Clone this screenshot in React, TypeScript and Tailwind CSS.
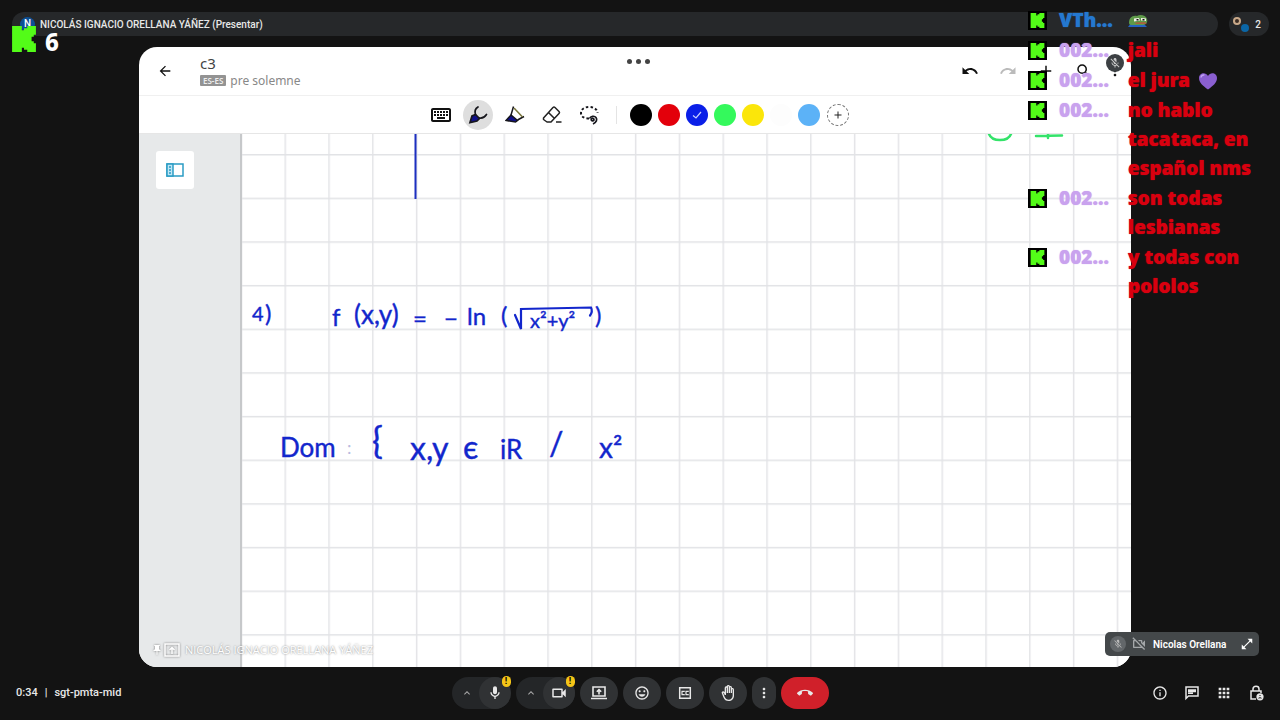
import type { ReactNode } from "react";
import {
  MdAdd,
  MdArrowBack,
  MdCallEnd,
  MdKeyboardArrowUp,
  MdMicOff,
  MdMoreVert,
  MdOpenInFull,
  MdApps,
  MdPushPin,
  MdRedo,
  MdSearch,
  MdUndo,
  MdOutlineBackHand,
  MdOutlineInfo,
  MdOutlineKeyboard,
  MdOutlineMic,
  MdOutlineMood,
  MdOutlineVideocam,
  MdOutlineVideocamOff,
} from "react-icons/md";

const MESSAGES = [
  { user: "VTh...", color: "text-[#2478d0]", text: "", emoji: "frog" },
  { user: "002...", color: "text-[#c9a2ee]", text: "jali" },
  { user: "002...", color: "text-[#c9a2ee]", text: "el jura", emoji: "heart" },
  { user: "002...", color: "text-[#c9a2ee]", text: "no hablo tacataca, en español nms" },
  { user: "002...", color: "text-[#c9a2ee]", text: "son todas lesbianas" },
  { user: "002...", color: "text-[#c9a2ee]", text: "y todas con pololos" },
];

const SWATCHES = [
  { name: "Negro", bg: "bg-black" },
  { name: "Rojo", bg: "bg-[#e3000b]" },
  { name: "Azul", bg: "bg-[#0a1fe8]", selected: true },
  { name: "Verde", bg: "bg-[#34f95c]" },
  { name: "Amarillo", bg: "bg-[#fbe60a]" },
  { name: "Blanco", bg: "bg-[#fdfdfd]" },
  { name: "Celeste", bg: "bg-[#5cb2f7]" },
];

function KickLogo({ className }: { className: string }) {
  return (
    <svg viewBox="0 0 24 24" className={className} fill="#53fc18" aria-hidden="true">
      <path d="M1 0h9v4h2V2h3V0h8v8h-2v2h-2v4h2v2h2v8h-8v-2h-3v-2h-2v4H1Z" />
    </svg>
  );
}

function Frog() {
  return (
    <svg viewBox="0 0 20 14" className="h-[14px] w-5" aria-hidden="true">
      <path d="M0 13 3 9l13 1 3 3H0Z" fill="#2563c4" />
      <path d="M1 9C1 4 4 1 9 2c3-2 9-1 10 3 1 3-1 6-4 6H5c-2 0-4 0-4-2Z" fill="#5f9a4a" />
      <path d="M6 4.500 11 4l1 2.500-6 1ZM13 4l5 .5V7l-5-.5Z" fill="#f4f4ea" />
      <path d="M8.500 5h2v1.500h-2ZM14.500 5h2v1.500h-2Z" fill="#111" />
      <path d="M7 8.500 17.500 8l1 2H8Z" fill="#a8623c" />
    </svg>
  );
}

function Heart() {
  return (
    <svg viewBox="0 0 20 18" className="h-[18px] w-5" aria-hidden="true">
      <path d="M10 17.500C5 14 1 10.500 1 6c0-5 6.500-6.500 9-2 2.500-4.500 9-3 9 2 0 4.500-4 8-9 11.500Z" fill="#8a5fd0" />
      <path d="M3 5.500C3.300 3.400 5 2.700 6.400 3" stroke="#c3a4f2" strokeWidth="1.500" fill="none" />
    </svg>
  );
}

function ChatOverlay() {
  return (
    <ul className="absolute top-[6px] right-2 z-20 flex flex-col gap-px font-['Noto_Sans','Open_Sans',sans-serif] text-[19px] leading-[29px] font-black">
      {MESSAGES.map((m, i) => (
        <li key={i} className="flex">
          <span className="mt-[5px] grid size-[19px] shrink-0 place-items-center bg-black">
            <KickLogo className="size-[15px]" />
          </span>
          <span className={`ml-3 w-[69px] shrink-0 [text-shadow:0_0_1px_currentColor] ${m.color}`}>{m.user}</span>
          <span className="flex w-36 gap-2 text-[#d8000f] [text-shadow:0_0_1px_#d8000f]">
            {m.text && <span>{m.text}</span>}
            {m.emoji && (
              <span className="flex h-[29px] items-center">{m.emoji === "frog" ? <Frog /> : <Heart />}</span>
            )}
          </span>
        </li>
      ))}
    </ul>
  );
}

function TopBar() {
  return (
    <header className="flex items-center gap-[11px] pt-3 pr-[11px] pl-3 text-[10px] font-medium text-[#e8e8e8]">
      <div className="flex h-6 flex-1 items-center gap-[5px] rounded-full bg-[#26282a] pl-2">
        <span className="grid size-[15px] place-items-center rounded-full bg-[#0d4f94] leading-none text-white">N</span>
        <span>NICOLÁS IGNACIO ORELLANA YÁÑEZ (Presentar)</span>
      </div>
      <div className="flex h-6 w-10 items-center justify-between rounded-full bg-[#26282a] pr-2 pl-1">
        <span className="relative size-4">
          <span className="absolute top-px left-0 size-2 rounded-full bg-[#c9a98a]" />
          <span className="absolute top-[3px] left-[2px] size-1 rounded-full bg-[#3b2d25]" />
          <span className="absolute right-0 bottom-0 size-2 rounded-full bg-[#0b66a6]" />
        </span>
        <span>2</span>
      </div>
    </header>
  );
}

function NoteHeader() {
  return (
    <div className="flex h-[49px] items-center border-b border-[#f0f0f0] pr-2 pl-[18px] text-[#111]">
      <button aria-label="Volver" className="grid size-4 place-items-center">
        <MdArrowBack className="size-4" />
      </button>
      <div className="ml-[27px] flex-1 pt-px font-['Noto_Sans',sans-serif]">
        <h1 className="text-[15px] leading-[18px] text-[#444]">c3</h1>
        <p className="flex items-center gap-1 text-xs leading-[18px] text-[#888]">
          <span className="rounded-[1px] bg-[#939393] px-[3px] text-[8px] leading-[11px] font-semibold text-[#eee]">ES-ES</span>
          pre solemne
        </p>
      </div>
      <div className="flex items-center gap-5">
        <button aria-label="Deshacer"><MdUndo className="size-[18px]" /></button>
        <button aria-label="Rehacer" className="text-[#bbb]"><MdRedo className="size-[18px]" /></button>
        <button aria-label="Agregar"><MdAdd className="size-[18px]" /></button>
        <button aria-label="Buscar"><MdSearch className="size-[18px]" /></button>
      </div>
      <button aria-label="Más" className="ml-[14px] w-4"><MdMoreVert className="size-4" /></button>
    </div>
  );
}

function ToolButton({ label, active, children }: { label: string; active?: boolean; children: ReactNode }) {
  return (
    <button
      aria-label={label}
      className={active ? "grid size-[30px] place-items-center rounded-full bg-[#dedede]" : "grid size-[30px] place-items-center"}
    >
      {children}
    </button>
  );
}

function Toolbar() {
  return (
    <div className="flex h-[37px] items-center pl-[287px]">
      <div className="flex gap-[7px]">
        <ToolButton label="Teclado"><MdOutlineKeyboard className="size-6 text-[#111]" /></ToolButton>
        <ToolButton label="Lápiz" active>
          <svg viewBox="0 0 20 20" className="size-5" fill="none" stroke="#16161c" strokeWidth="1.700">
            <path d="M2 17.500 4 11l3.500-1.500 4 4-2.500 2.500Z" fill="#10108a" />
            <path d="M7.500 9.500C6.500 6.500 7.500 3.500 10 2M11.500 13c3 .5 5.500-1.200 7-3.500" strokeLinecap="round" />
          </svg>
        </ToolButton>
        <ToolButton label="Marcador">
          <svg viewBox="0 0 20 20" className="size-5" fill="none" stroke="#16161c" strokeWidth="1.500">
            <path d="M1 15.500 6 10l6.500 5.500-2 1.500Z" fill="#10108a" />
            <path d="M6 10 8.500 1.500M12.500 15l6.500-3.500" />
            <path d="m9 3 8.500 9" stroke="#77743a" />
          </svg>
        </ToolButton>
        <ToolButton label="Borrador">
          <svg viewBox="0 0 20 20" className="size-5" fill="none" stroke="#222" strokeWidth="1.500" strokeLinejoin="round">
            <path d="m1.500 13 9.500-10.500q1-1 2 0L17 6.500q1 1 0 2L9 17H5L1.500 14.500ZM6.500 7.500l6 6" />
            <path d="M14 17h5.500" />
          </svg>
        </ToolButton>
        <ToolButton label="Lazo">
          <svg viewBox="0 0 20 20" className="size-5" fill="none" stroke="#16161c" strokeWidth="2">
            <path d="M10 13.500c-5 0-8-2-8-5.500s3-6 8-6 8.500 2.500 8.500 6" strokeDasharray="2.500 2.200" />
            <path d="M10.500 13.500c1-2.500 5-3 6.500-1s.5 5-3 6.500M14.500 13.500c-1.500-.5-3 1-2 2s3.500 0 2-2Z" strokeWidth="1.700" />
          </svg>
        </ToolButton>
      </div>
      <div className="mr-[10px] ml-3 h-[18px] w-px bg-[#e4e4e4]" />
      <div className="flex items-center gap-[6px] pl-[3px]">
        {SWATCHES.map((s) => (
          <button key={s.name} aria-label={s.name} className={`grid size-[22px] place-items-center rounded-full ${s.bg}`}>
            {s.selected && (
              <svg viewBox="0 0 10 10" className="size-[10px]" fill="none" stroke="#c8d0ff" strokeWidth="1.200">
                <path d="M1 5.500 4 8l5-6" />
              </svg>
            )}
          </button>
        ))}
        <button aria-label="Agregar color" className="ml-px grid size-[22px] place-items-center rounded-full border border-dashed border-[#777] text-[#222]">
          <MdAdd className="size-3" />
        </button>
      </div>
    </div>
  );
}

// Squared paper and ink; ink is placed from the top left corner of the sheet.
function Sheet() {
  return (
    <div className="relative min-w-0 flex-1 overflow-hidden border-l-2 border-[#c6c8ca] bg-white">
      <svg className="absolute inset-0 h-full w-full font-['Lato','Noto_Sans',sans-serif]" role="img" aria-label="Apuntes">
        <defs>
          <pattern id="squares" x="42.500" y="20" width="43.800" height="43.650" patternUnits="userSpaceOnUse">
            <path d="M.75 0V44M0 .75H44" stroke="#e2e3e6" strokeWidth="1.400" />
          </pattern>
        </defs>
        <rect width="100%" height="100%" fill="url(#squares)" />
        <g stroke="#34e36a" strokeWidth="2.500" fill="none" strokeLinecap="round">
          <path d="M747 0c3 8 19 8 22 0M794 2l26-.5M806 0v4" />
        </g>
        <path d="M173.500 0V65" stroke="#1c2fc0" strokeWidth="2" />
        <g fill="#1226cc" stroke="#1226cc" strokeWidth="0.400" fontSize="24">
          <text x="10" y="187" fontSize="20">4</text>
          <text x="23" y="188">)</text>
          <text x="90" y="192">f</text>
          <text x="112" y="190" fontSize="26">(x,y)</text>
          <text x="171" y="193">=</text>
          <text x="202" y="193">−</text>
          <text x="225" y="191">ln</text>
          <text x="259" y="190">(</text>
          <text x="288" y="194" fontSize="20">x²+y²</text>
          <text x="353" y="190">)</text>
          <text x="38" y="323" fontSize="26">Dom</text>
          <text x="130" y="320" fontSize="36">{"{"}</text>
          <text x="168" y="326" fontSize="32">x,y</text>
          <text x="221" y="325" fontSize="32">є</text>
          <text x="258" y="325" fontSize="26">iR</text>
          <text x="307" y="321" fontSize="32">/</text>
          <text x="357" y="324" fontSize="28">x²</text>
        </g>
        <text x="105" y="320" fill="#b9bce0" fontSize="18">:</text>
        <path d="m273 181 6 14V175l70-1.500q2 4-1 8" stroke="#1226cc" strokeWidth="2.200" fill="none" strokeLinecap="round" />
      </svg>
    </div>
  );
}

function Presentation() {
  return (
    <main className="relative mt-[11px] mr-[149px] ml-[139px] flex flex-1 flex-col overflow-hidden rounded-[18px] bg-white">
      <div className="absolute top-3 left-1/2 -ml-2 flex gap-1">
        <span className="size-[5px] rounded-full bg-[#444]" />
        <span className="size-[5px] rounded-full bg-[#444]" />
        <span className="size-[5px] rounded-full bg-[#444]" />
      </div>
      <NoteHeader />
      <Toolbar />
      <div className="flex flex-1 border-t border-[#e6e6e6]">
        <aside className="w-[101px] bg-[#e7e9ea] pt-[17px] pl-[17px]">
          <button aria-label="Páginas" className="grid size-[38px] place-items-center rounded-[3px] bg-white">
            <svg viewBox="0 0 18 14" className="h-[14px] w-[18px]" fill="#fff" stroke="#2b9cc4" strokeWidth="1.500">
              <path d="M1 1h16v12H1Z" />
              <path d="M1 1h6v12H1Z" fill="#bfe6f5" />
              <path d="M3 4h2M3 7h2M3 10h2" />
            </svg>
          </button>
        </aside>
        <Sheet />
      </div>
      <div className="absolute bottom-[9px] left-[12px] flex items-center gap-px font-['Open_Sans',sans-serif] text-[11px] leading-4 font-medium text-white [text-shadow:0_0_2px_#777]">
        <MdPushPin className="size-3 drop-shadow-[0_0_1px_#777]" />
        <svg viewBox="0 0 16 14" className="h-[14px] w-4 drop-shadow-[0_0_1px_#777]" fill="none" stroke="#fff" strokeWidth="1.500">
          <path d="M1 1h14v12H1ZM8 11V5M5.500 7 8 4.500 10.500 7" />
        </svg>
        <span className="ml-1">NICOLÁS IGNACIO ORELLANA YÁÑEZ</span>
      </div>
    </main>
  );
}

function SelfTile() {
  return (
    <div className="absolute right-[21px] bottom-16 z-10 flex h-6 w-[154px] items-center rounded-[5px] bg-[#44484a] pr-[5px] pl-[5px] text-[10px] font-semibold text-white">
      <span className="grid size-4 place-items-center rounded-full bg-[#63676a] text-[#bbb]"><MdMicOff className="size-[10px]" /></span>
      <MdOutlineVideocamOff className="ml-[5px] size-4 text-[#a4a7a9]" />
      <span className="ml-[6px] flex-1 whitespace-nowrap">Nicolas Orellana</span>
      <button aria-label="Expandir"><MdOpenInFull className="size-[14px]" /></button>
    </div>
  );
}

function SplitButton({ label, children }: { label: string; children: ReactNode }) {
  return (
    <div className="relative flex h-8 w-[59px] items-center rounded-full bg-[#242628]">
      <button aria-label={`Opciones de ${label}`} className="grid h-8 flex-1 place-items-center pl-1 text-[#aaa]">
        <MdKeyboardArrowUp className="size-3" />
      </button>
      <button aria-label={label} className="grid size-8 place-items-center rounded-full bg-[#303234]">{children}</button>
      <span className="absolute -top-px right-0 grid h-[11px] w-[9px] place-items-center rounded-full bg-[#f5c518] text-[9px] leading-none font-bold text-black">!</span>
    </div>
  );
}

function RoundButton({ label, children }: { label: string; children: ReactNode }) {
  return (
    <button aria-label={label} className="grid h-8 w-[38px] place-items-center rounded-full bg-[#303234]">
      {children}
    </button>
  );
}

function CallBar() {
  return (
    <footer className="grid h-[53px] grid-cols-[1fr_auto_1fr] items-center px-4 pb-px text-[#e8e8e8]">
      <div className="flex items-center gap-[7px] text-[11px] font-medium">
        <span>0:34</span>
        <span>|</span>
        <span>sgt-pmta-mid</span>
      </div>
      <div className="flex gap-[5px]">
        <SplitButton label="Micrófono"><MdOutlineMic className="size-4" /></SplitButton>
        <SplitButton label="Cámara"><MdOutlineVideocam className="size-[18px]" /></SplitButton>
        <RoundButton label="Presentar">
          <svg viewBox="0 0 18 16" className="h-4 w-[18px]" fill="none" stroke="currentColor" strokeWidth="1.600">
            <path d="M3 2h12v9H3ZM1 13.500h16M9 9.500V5M6.800 6.800 9 4.600l2.200 2.200" />
          </svg>
        </RoundButton>
        <RoundButton label="Reacciones"><MdOutlineMood className="size-4" /></RoundButton>
        <RoundButton label="Subtítulos">
          <svg viewBox="0 0 16 16" className="size-4" fill="none" stroke="currentColor" strokeWidth="1.500">
            <path d="M2.700 2.700h10.600v10.600H2.700Z" />
            <path d="M7.300 6.800V6.300H5v3.400h2.300v-.5M11.300 6.800V6.300H9v3.400h2.300v-.5" strokeWidth="1.200" />
          </svg>
        </RoundButton>
        <RoundButton label="Levantar la mano"><MdOutlineBackHand className="size-4" /></RoundButton>
        <button aria-label="Más opciones" className="grid h-8 w-6 place-items-center rounded-full bg-[#303234]">
          <MdMoreVert className="size-4" />
        </button>
        <button aria-label="Salir de la llamada" className="grid h-8 w-12 place-items-center rounded-full bg-[#d0202a]">
          <MdCallEnd className="size-4" />
        </button>
      </div>
      <div className="flex justify-end gap-4">
        <button aria-label="Información"><MdOutlineInfo className="size-4" /></button>
        <button aria-label="Chat">
          <svg viewBox="0 0 16 16" className="size-4" fill="none" stroke="currentColor" strokeWidth="1.500">
            <path d="M2 13.500V2h12v9H4.500Z" />
            <path d="M4 5h8M4 6.500h8M4 8.200h5" strokeWidth="1.400" />
          </svg>
        </button>
        <button aria-label="Actividades"><MdApps className="size-4" /></button>
        <button aria-label="Controles del organizador">
          <svg viewBox="0 0 16 16" className="size-4" fill="none" stroke="currentColor" strokeWidth="1.500">
            <path d="M8 14H3V6h10v2M5 6V4q0-2.700 3-2.700T11 4v2" />
            <circle cx="12" cy="11.800" r="3.600" fill="currentColor" stroke="none" />
            <path d="M10.500 13.200q1.500-1 3 0M12 10v1" stroke="#131313" strokeWidth="1" />
          </svg>
        </button>
      </div>
    </footer>
  );
}

export default function App() {
  return (
    <div className="relative flex min-h-screen flex-col overflow-hidden bg-[#131313] font-['Roboto',sans-serif]">
      <TopBar />
      <div className="absolute top-[26px] left-[11px] z-20 flex items-end gap-2 font-['Noto_Sans',sans-serif] text-2xl leading-5 font-extrabold text-white">
        <KickLogo className="size-[26px]" />
        <span>6</span>
      </div>
      <Presentation />
      <span className="absolute top-[54px] right-[156px] z-10 grid size-[18px] place-items-center rounded-full bg-[#3c4043] text-[#ccc]">
        <MdMicOff className="size-3" />
      </span>
      <SelfTile />
      <CallBar />
      <ChatOverlay />
    </div>
  );
}
